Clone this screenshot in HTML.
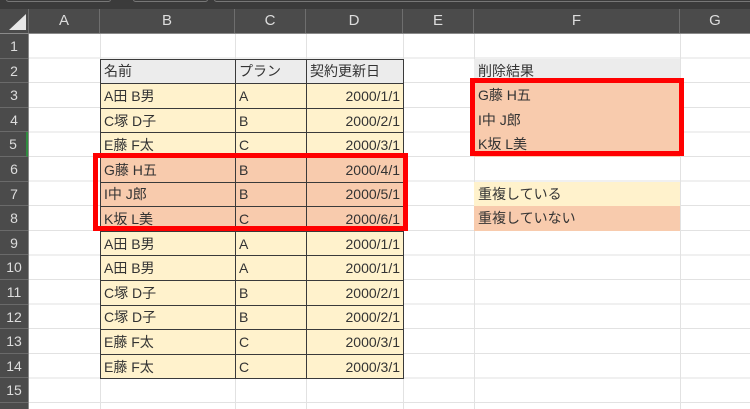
<!DOCTYPE html>
<html><head><meta charset="utf-8"><style>
*{margin:0;padding:0;box-sizing:border-box}
html,body{width:750px;height:409px;overflow:hidden}
body{background:#fff;position:relative;font-family:"Liberation Sans","Noto Sans CJK JP",sans-serif;font-size:14px;color:#333}
.a{position:absolute}
#top{left:0;top:0;width:750px;height:9px;background:#3b3b3b}
#ch{left:0;top:9px;width:750px;height:25px;background:#4b4b4b;border-bottom:1px solid #8a8a8a}
.chc{position:absolute;top:0;height:24px;line-height:24px;text-align:center;color:#ddd;font-size:15px;border-right:1px solid #6e6e6e}
#rh{left:0;top:34px;width:29px;height:375px;background:#4b4b4b;border-right:1px solid #8a8a8a;overflow:hidden}
.rn{height:24.6px;line-height:24.6px;text-align:center;color:#ddd;font-size:14px;border-bottom:1px solid #6a6a6a}
#grid{left:29px;top:34px;width:721px;height:375px;
background-image:repeating-linear-gradient(to bottom,transparent 0,transparent 23.6px,#e2e2e2 23.6px,#e2e2e2 24.6px)}
.vl{position:absolute;top:34px;height:375px;width:1px;background:#e2e2e2}
table{position:absolute;left:100px;top:58.6px;border-collapse:collapse;table-layout:fixed}
td{height:24.6px;border:1px solid #3a3a3a;padding:0 3px;white-space:nowrap;background:#fff2cc;overflow:hidden}
tr.h td{background:#ececec}
tr.o td{background:#f8cbad}
td.r{text-align:right;padding-right:3px}
.f{position:absolute;left:474px;width:206px;height:24.6px;line-height:24.6px;padding-left:4px}
.red{position:absolute;border:5px solid #ff0000}
</style></head><body>
<div class="a" id="top">
<div class="a" style="left:6px;top:-3px;width:105px;height:5px;border:1px solid #777;border-radius:3px"></div>
<div class="a" style="left:133px;top:-3px;width:75px;height:5px;border:1px solid #777;border-radius:3px"></div>
<div class="a" style="left:214px;top:-3px;width:540px;height:5px;border:1px solid #777;border-radius:3px"></div>
</div>
<div class="a" id="ch">
<div class="chc" style="left:0;width:29px"><svg width="29" height="24"><polygon points="26,5 26,21 9,21" fill="#e8e8e8"/></svg></div>
<div class="chc" style="left:29px;width:71px">A</div>
<div class="chc" style="left:100px;width:135px">B</div>
<div class="chc" style="left:235px;width:71px">C</div>
<div class="chc" style="left:306px;width:97px">D</div>
<div class="chc" style="left:403px;width:71px">E</div>
<div class="chc" style="left:474px;width:206px">F</div>
<div class="chc" style="left:680px;width:70px;border-right:none">G</div>
</div>
<div class="a" id="grid"></div>
<div class="vl" style="left:100px"></div><div class="vl" style="left:235px"></div><div class="vl" style="left:306px"></div><div class="vl" style="left:403px"></div><div class="vl" style="left:474px"></div><div class="vl" style="left:680px"></div>
<div class="a" id="rh">
<div class="rn">1</div><div class="rn">2</div><div class="rn">3</div><div class="rn">4</div><div class="rn" style="border-right:2px solid #2e8b3e">5</div><div class="rn">6</div><div class="rn">7</div><div class="rn">8</div><div class="rn">9</div><div class="rn">10</div><div class="rn">11</div><div class="rn">12</div><div class="rn">13</div><div class="rn">14</div><div class="rn">15</div>
</div>
<table>
<colgroup><col style="width:135px"><col style="width:71px"><col style="width:97px"></colgroup>
<tr class="h"><td>名前</td><td>プラン</td><td>契約更新日</td></tr>
<tr><td>A田 B男</td><td>A</td><td class="r">2000/1/1</td></tr>
<tr><td>C塚 D子</td><td>B</td><td class="r">2000/2/1</td></tr>
<tr><td>E藤 F太</td><td>C</td><td class="r">2000/3/1</td></tr>
<tr class="o"><td>G藤 H五</td><td>B</td><td class="r">2000/4/1</td></tr>
<tr class="o"><td>I中 J郎</td><td>B</td><td class="r">2000/5/1</td></tr>
<tr class="o"><td>K坂 L美</td><td>C</td><td class="r">2000/6/1</td></tr>
<tr><td>A田 B男</td><td>A</td><td class="r">2000/1/1</td></tr>
<tr><td>A田 B男</td><td>A</td><td class="r">2000/1/1</td></tr>
<tr><td>C塚 D子</td><td>B</td><td class="r">2000/2/1</td></tr>
<tr><td>C塚 D子</td><td>B</td><td class="r">2000/2/1</td></tr>
<tr><td>E藤 F太</td><td>C</td><td class="r">2000/3/1</td></tr>
<tr><td>E藤 F太</td><td>C</td><td class="r">2000/3/1</td></tr>
</table>
<div class="f" style="top:58.6px;background:#ececec">削除結果</div>
<div class="f" style="top:83.2px;background:#f8cbad">G藤 H五</div>
<div class="f" style="top:107.8px;background:#f8cbad">I中 J郎</div>
<div class="f" style="top:132.4px;background:#f8cbad">K坂 L美</div>
<div class="f" style="top:181.6px;background:#fff2cc">重複している</div>
<div class="f" style="top:206.2px;background:#f8cbad">重複していない</div>
<div class="red" style="left:93px;top:153px;width:315px;height:78px"></div>
<div class="red" style="left:470px;top:78px;width:214px;height:78px"></div>
</body></html>
